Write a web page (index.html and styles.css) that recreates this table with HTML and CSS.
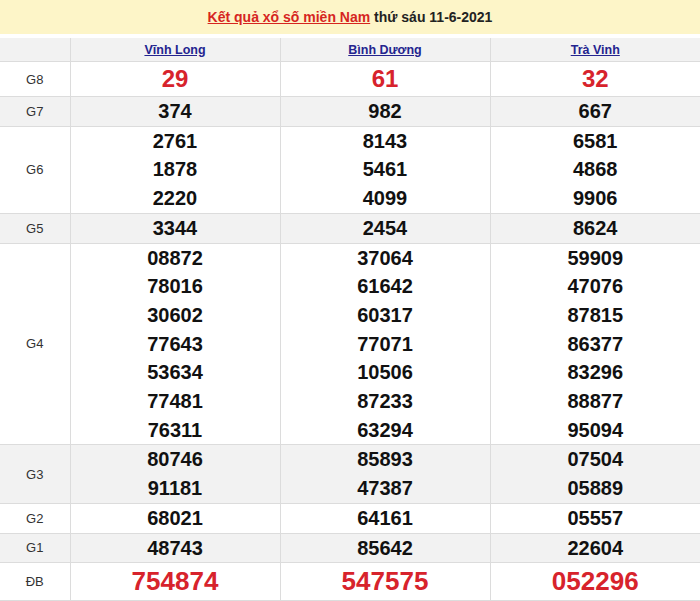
FILE: index.html
```html
<!DOCTYPE html>
<html lang="vi">
<head>
<meta charset="utf-8">
<title>Kết quả xổ số miền Nam</title>
<link rel="stylesheet" href="styles.css">
</head>
<body>
<div class="title"><a href="#" class="title-link">Kết quả xổ số miền Nam</a> thứ sáu 11-6-2021</div>
<table class="results">
  <colgroup><col class="c-label"><col><col><col></colgroup>
  <thead>
    <tr class="head">
      <th></th>
      <th><a href="#">Vĩnh Long</a></th>
      <th><a href="#">Bình Dương</a></th>
      <th><a href="#">Trà Vinh</a></th>
    </tr>
  </thead>
  <tbody>
    <tr class="g8"><td class="lbl">G8</td><td class="red big">29</td><td class="red big">61</td><td class="red big">32</td></tr>
    <tr class="alt"><td class="lbl">G7</td><td class="num">374</td><td class="num">982</td><td class="num">667</td></tr>
    <tr><td class="lbl">G6</td>
      <td class="num"><div>2761</div><div>1878</div><div>2220</div></td>
      <td class="num"><div>8143</div><div>5461</div><div>4099</div></td>
      <td class="num"><div>6581</div><div>4868</div><div>9906</div></td></tr>
    <tr class="alt"><td class="lbl">G5</td><td class="num">3344</td><td class="num">2454</td><td class="num">8624</td></tr>
    <tr><td class="lbl">G4</td>
      <td class="num"><div>08872</div><div>78016</div><div>30602</div><div>77643</div><div>53634</div><div>77481</div><div>76311</div></td>
      <td class="num"><div>37064</div><div>61642</div><div>60317</div><div>77071</div><div>10506</div><div>87233</div><div>63294</div></td>
      <td class="num"><div>59909</div><div>47076</div><div>87815</div><div>86377</div><div>83296</div><div>88877</div><div>95094</div></td></tr>
    <tr class="alt"><td class="lbl">G3</td>
      <td class="num"><div>80746</div><div>91181</div></td>
      <td class="num"><div>85893</div><div>47387</div></td>
      <td class="num"><div>07504</div><div>05889</div></td></tr>
    <tr><td class="lbl">G2</td><td class="num">68021</td><td class="num">64161</td><td class="num">05557</td></tr>
    <tr class="alt"><td class="lbl">G1</td><td class="num">48743</td><td class="num">85642</td><td class="num">22604</td></tr>
    <tr class="db"><td class="lbl">ĐB</td><td class="red huge">754874</td><td class="red huge">547575</td><td class="red huge">052296</td></tr>
  </tbody>
</table>
</body>
</html>
```
FILE: styles.css
```css
html, body {
  margin: 0;
  padding: 0;
  background: #ffffff;
  font-family: "Liberation Sans", Arial, sans-serif;
  color: #111;
}
.title {
  height: 34px;
  line-height: 34px;
  background: #fdf5c8;
  text-align: center;
  font-size: 14px;
  font-weight: bold;
  color: #222;
  margin-bottom: 4px;
}
.title-link {
  color: #d6251f;
  text-decoration: underline;
}
.results {
  width: 700px;
  border-collapse: collapse;
  table-layout: fixed;
}
.c-label { width: 70px; }
.results th, .results td {
  border: 1px solid #dcdcdc;
  padding: 0;
  text-align: center;
  vertical-align: middle;
}
.results tr > :first-child { border-left: none; }
.results tr > :last-child { border-right: none; }
.results thead th { border-top: none; }
.head th {
  height: 23px;
  background: #f2f2f2;
  font-size: 12.5px;
  font-weight: bold;
}
.head a {
  color: #24248f;
  text-decoration: underline;
}
.alt td { background: #f2f2f2; }
.lbl {
  font-size: 13px;
  color: #333;
}
.num {
  font-size: 20px;
  font-weight: bold;
  line-height: 28.7px;
  color: #111;
}
.g8 td { height: 34px; }
.red { color: #d7232c; font-weight: bold; }
.big { font-size: 24px; }
.huge { font-size: 26px; }
.db td { height: 37px; }
```
